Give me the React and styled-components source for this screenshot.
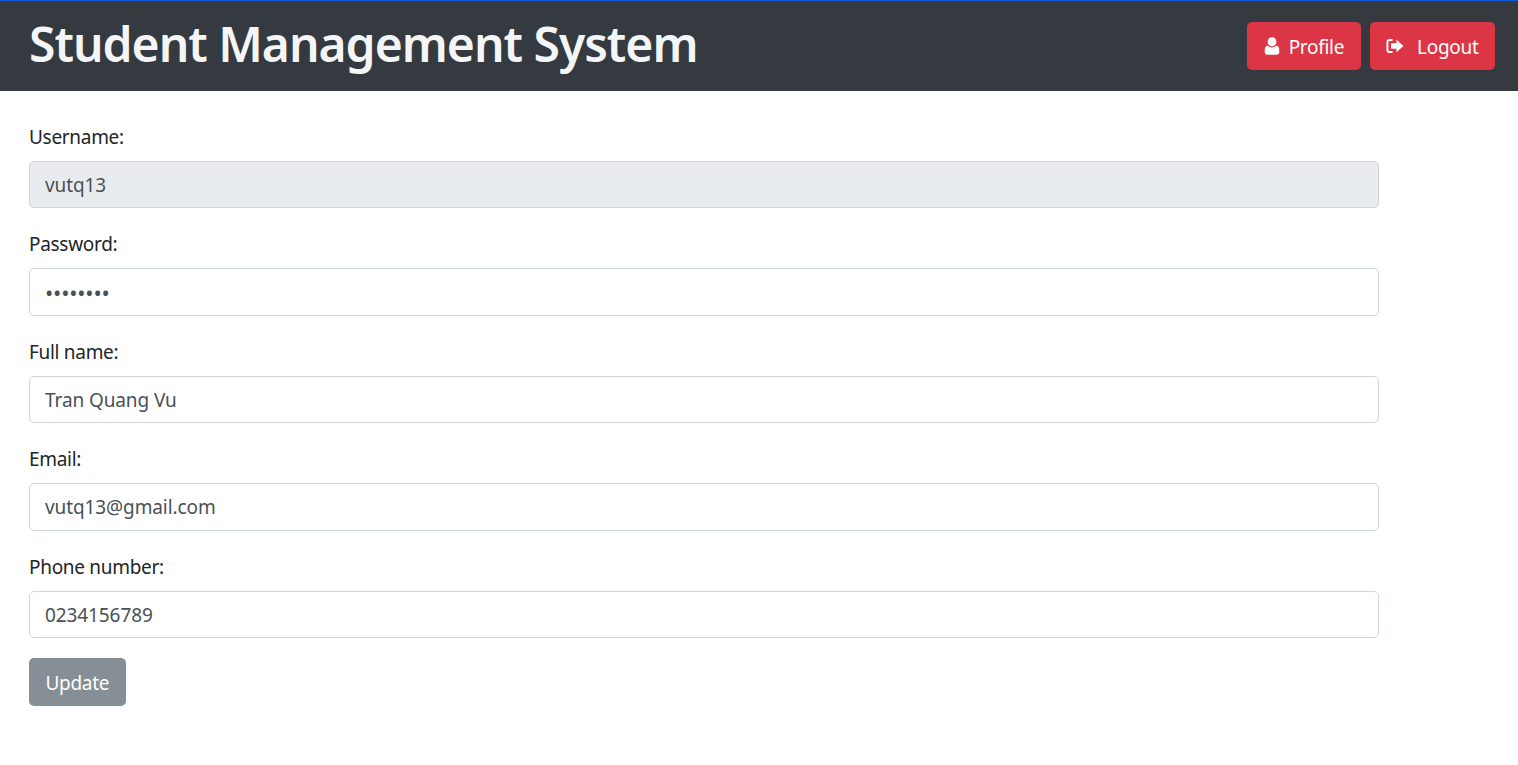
import React from 'react';
import styled, { createGlobalStyle } from 'styled-components';

const GlobalStyle = createGlobalStyle`
    body {
        margin: 0;
        background: #fff;
        font-family: "Noto Sans", "Open Sans", sans-serif;
        color: #212529;
    }
`;

const Header = styled.header`
    display: flex;
    align-items: center;
    justify-content: space-between;
    height: 90px;
    padding: 0 23px 0 29px;
    background-color: #343a40;
    border-top: 1px solid #0d56d6;
`;

const Title = styled.h1`
    margin: 0;
    padding-bottom: 4px;
    font-size: 48px;
    font-weight: 600;
    line-height: 1.2;
    color: #f4f5f6;
    letter-spacing: -1px;
`;

const Nav = styled.nav`
    display: flex;
    gap: 9px;
`;

const Button = styled.button`
    display: inline-flex;
    align-items: center;
    height: 47.5px;
    padding: 2px 16.5px 0;
    border: 0;
    border-radius: 5px;
    background-color: ${(props) => props.color};
    color: #fff;
    font-family: inherit;
    font-size: 19px;
    letter-spacing: -0.3px;
`;

const IconSlot = styled.span`
    display: inline-flex;
    margin-top: -2px;
    margin-right: ${(props) => props.gap}px;
`;

const Form = styled.form`
    width: 1350px;
    padding: 29.75px 0 0 29px;
`;

const Field = styled.div`
    margin-bottom: 20px;
`;

const Label = styled.label`
    display: block;
    margin-bottom: 10px;
    padding-top: 2px;
    font-size: 19px;
    line-height: 28px;
    letter-spacing: -0.3px;
`;

const Input = styled.input`
    display: block;
    box-sizing: border-box;
    width: 100%;
    height: 47.5px;
    padding: 0 15px;
    border: 1px solid #ced4da;
    border-radius: 5px;
    outline: none;
    background-color: ${(props) => (props.disabled ? '#e9ecef' : '#fff')};
    color: #495057;
    font-family: inherit;
    font-size: 19px;
    letter-spacing: -0.1px;

    &[type='password'] {
        font-size: 22px;
        letter-spacing: -0.2px;
    }
`;

const UserIcon = () => (
    <svg width="16" height="18" viewBox="0 0 15 18" fill="#fff">
        <ellipse cx="7.5" cy="4.8" rx="4.4" ry="4.6" />
        <path d="M3.2 8.6c1.1 1.2 2.6 1.9 4.3 1.9s3.2-.7 4.3-1.9c1.9.3 3 1.9 3 4.6v1.900c0 1.600-1 2.600-2.600 2.600H2.800C1.200 17.700.2 16.700.2 15.100v-1.900c0-2.700 1.100-4.300 3-4.600z" />
    </svg>
);

const LogoutIcon = () => (
    <svg width="18" height="16" viewBox="0 0 18 16" fill="#fff">
        <path d="M6.500 1H3.300C1.500 1 .5 2 .5 3.800v8.400C.5 14 1.500 15 3.300 15h3.200v-1.900H3.500c-.7 0-1.100-.4-1.100-1.100V4c0-.7.4-1.100 1.100-1.100h3z" />
        <path d="M10.500 1.800 17.500 8l-7 6.200v-3.500H5V5.300h5.500z" />
    </svg>
);

const fields = [
    { label: 'Username:', type: 'text', value: 'vutq13', disabled: true },
    { label: 'Password:', type: 'password', value: '12345678' },
    { label: 'Full name:', type: 'text', value: 'Tran Quang Vu' },
    { label: 'Email:', type: 'text', value: 'vutq13@gmail.com' },
    { label: 'Phone number:', type: 'text', value: '0234156789' },
];

const App = () => (
    <>
        <GlobalStyle />
        <Header>
            <Title>Student Management System</Title>
            <Nav>
                <Button color="#dc3545" type="button">
                    <IconSlot gap={9}><UserIcon /></IconSlot>
                    Profile
                </Button>
                <Button color="#dc3545" type="button">
                    <IconSlot gap={13}><LogoutIcon /></IconSlot>
                    Logout
                </Button>
            </Nav>
        </Header>
        <Form>
            {fields.map((field) => (
                <Field key={field.label}>
                    <Label>{field.label}</Label>
                    <Input type={field.type} defaultValue={field.value} disabled={field.disabled} />
                </Field>
            ))}
            <Button color="#868e96" type="button">Update</Button>
        </Form>
    </>
);

export default App;
